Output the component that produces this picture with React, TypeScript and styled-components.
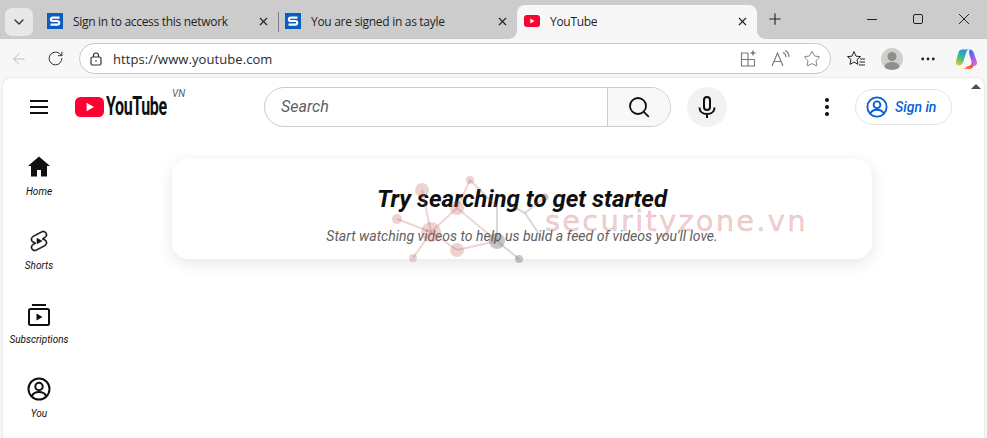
import styled, { createGlobalStyle } from 'styled-components';
import { ChevronDown, X, Plus, ArrowLeft, RotateCw, Star, MoreHorizontal } from 'lucide-react';

const GlobalStyle = createGlobalStyle`
  html, body { margin: 0; padding: 0; background: #f7f7f7; overflow: hidden; }
  * { box-sizing: border-box; }
`;

// ── Browser chrome ──

const Page = styled.div`
  position: relative;
  width: 987px;
  height: 438px;
  display: flex;
  flex-direction: column;
  overflow: hidden;
  font-family: 'Open Sans', 'Liberation Sans', sans-serif;
  color: #1f1f1f;
`;

const TabStrip = styled.div`
  height: 39px;
  flex: none;
  display: flex;
  align-items: flex-end;
  background: #cccccc;
  padding-left: 5px;
`;

const TabMenu = styled.div`
  width: 28px;
  height: 28px;
  margin: 0 7px 3px 0;
  border-radius: 7px;
  background: #e8e8e8;
  display: flex;
  align-items: center;
  justify-content: center;
`;

const Tab = styled.div<{ $active?: boolean; $width: number; $inset?: number }>`
  position: relative;
  width: ${({ $width }) => $width}px;
  height: 34px;
  padding: 0 8px 2px ${({ $inset }) => $inset ?? 7}px;
  display: flex;
  align-items: center;
  gap: 10px;
  font-size: 12px;
  letter-spacing: -0.3px;
  border-radius: 8px 8px 0 0;
  background: ${({ $active }) => ($active ? '#f7f7f7' : 'transparent')};

  ${({ $active }) =>
    $active &&
    `
    &::before, &::after {
      content: '';
      position: absolute;
      bottom: 0;
      width: 8px;
      height: 8px;
    }
    &::before {
      left: -8px;
      background: radial-gradient(circle at 0 0, transparent 7.5px, #f7f7f7 8px);
    }
    &::after {
      right: -8px;
      background: radial-gradient(circle at 100% 0, transparent 7.5px, #f7f7f7 8px);
    }
  `}
`;

const TabLabel = styled.span`
  flex: 1;
  white-space: nowrap;
  overflow: hidden;
`;

const TabDivider = styled.div`
  width: 1px;
  height: 20px;
  margin: 0 0 7px;
  background: #7f7f7f;
  flex: none;
`;

const TabsEnd = styled.div`
  margin-left: 9px;
  height: 39px;
  display: flex;
  align-items: center;
  flex: 1;
  padding-bottom: 1px;
`;

const WindowButtons = styled.div`
  margin-left: auto;
  display: flex;
  align-items: center;
  padding-right: 15px;
  gap: 30px;
  height: 38px;
`;

const Toolbar = styled.div`
  height: 39px;
  flex: none;
  display: flex;
  align-items: center;
  background: #f7f7f7;
  padding: 0 0 0 9px;
`;

const NavButton = styled.div<{ $width: number; $gap?: number }>`
  width: ${({ $width }) => $width}px;
  margin-left: ${({ $gap }) => $gap ?? 0}px;
  display: flex;
  justify-content: center;
  flex: none;
`;

const AddressBar = styled.div`
  width: 752px;
  height: 31px;
  margin-left: 6px;
  flex: none;
  display: flex;
  align-items: center;
  padding: 0 9px 0 9px;
  background: #ffffff;
  border: 1px solid #c9c9c9;
  border-radius: 16px;
`;

const Url = styled.span`
  margin-left: 10px;
  flex: 1;
  font-size: 13px;
  letter-spacing: 0.08px;
  color: #2b2b2b;
`;

const AddressIcons = styled.div`
  display: flex;
  align-items: center;
  gap: 12px;
`;

const ToolIcons = styled.div`
  display: flex;
  align-items: center;
  margin-left: 15px;
  gap: 15px;
`;

const Avatar = styled.div`
  width: 22px;
  height: 22px;
  border-radius: 50%;
  background: #cfcfcc;
  overflow: hidden;
`;

const MoreButton = styled.div`
  display: flex;
  margin: 0 3px 0 1px;
`;

// ── YouTube page ──

const Viewport = styled.main`
  flex: 1;
  margin: 0 3px;
  min-height: 0;
  position: relative;
  background: #ffffff;
  border-radius: 8px 8px 0 0;
  box-shadow: 0 0 2px rgba(0, 0, 0, 0.18);
  font-family: Roboto, 'Liberation Sans', sans-serif;
  font-style: italic;
`;

const Header = styled.header`
  height: 58px;
  display: flex;
  align-items: center;
`;

const HeaderStart = styled.div`
  width: 261px;
  flex: none;
  display: flex;
  align-items: center;
  padding-left: 24px;
`;

const Logo = styled.div`
  position: relative;
  margin-left: 24px;
  display: flex;
  align-items: center;
`;

const LogoWord = styled.span`
  display: inline-block;
  width: 63px;
  margin-left: 2px;
  font-style: normal;
  font-weight: 700;
  font-size: 25px;
  line-height: 24px;
  letter-spacing: -0.6px;
  color: #0f0f0f;
  transform: scaleX(0.64);
  transform-origin: left center;
  white-space: nowrap;
`;

const Country = styled.span`
  position: absolute;
  left: 97px;
  top: -7px;
  font-size: 10px;
  color: #606060;
`;

const SearchBox = styled.div`
  width: 407px;
  height: 40px;
  flex: none;
  display: flex;
  border: 1px solid #cccccc;
  border-radius: 20px;
  overflow: hidden;
`;

const SearchInput = styled.div`
  flex: 1;
  padding: 0 0 2px 16px;
  display: flex;
  align-items: center;
  font-size: 16px;
  color: #606060;
`;

const SearchButton = styled.div`
  width: 63px;
  flex: none;
  display: flex;
  align-items: center;
  justify-content: center;
  background: #f8f8f8;
  border-left: 1px solid #cccccc;
`;

const MicButton = styled.div`
  width: 40px;
  height: 40px;
  margin-left: 16px;
  flex: none;
  border-radius: 50%;
  background: #f2f2f2;
  display: flex;
  align-items: center;
  justify-content: center;
`;

const HeaderEnd = styled.div`
  flex: 1;
  display: flex;
  align-items: center;
  justify-content: flex-end;
  padding-right: 32px;
`;

const SignIn = styled.div`
  width: 97px;
  height: 36px;
  margin-left: 16px;
  display: flex;
  align-items: center;
  gap: 7px;
  padding-left: 10px;
  border: 1px solid #e5e5e5;
  border-radius: 18px;
  font-size: 14px;
  font-weight: 500;
  color: #065fd4;
`;

const ScrollArrow = styled.div`
  position: absolute;
  top: 6px;
  right: 3px;
  width: 0;
  height: 0;
  border-left: 5px solid transparent;
  border-right: 5px solid transparent;
  border-bottom: 5px solid #505050;
`;

const Body = styled.div`
  display: flex;
`;

const Sidebar = styled.nav`
  width: 72px;
  flex: none;
  padding-top: 3px;
`;

const SideItem = styled.div`
  height: 74px;
  padding-top: 16px;
  display: flex;
  flex-direction: column;
  align-items: center;
  gap: 6px;
`;

const SideLabel = styled.span`
  font-size: 10px;
  line-height: 14px;
  color: #0f0f0f;
  white-space: nowrap;
`;

const Feed = styled.section`
  flex: 1;
  padding: 23px 0 0 97px;
`;

const PromptCard = styled.div`
  width: 700px;
  height: 100px;
  padding-top: 25px;
  border-radius: 16px;
  background: #ffffff;
  box-shadow: 0 4px 16px rgba(0, 0, 0, 0.1);
  text-align: center;
`;

const PromptTitle = styled.h2`
  margin: 0;
  font-size: 24px;
  line-height: 30px;
  font-weight: 700;
  color: #0f0f0f;
`;

const PromptText = styled.p`
  margin: 12px 0 0;
  font-size: 14px;
  line-height: 20px;
  color: #606060;
`;

// ── Watermark over the screenshot ──

const Watermark = styled.div`
  position: absolute;
  left: 390px;
  top: 170px;
  pointer-events: none;
`;

const WatermarkText = styled.span`
  position: absolute;
  left: 155px;
  top: 34px;
  font-family: 'DejaVu Sans', sans-serif;
  font-size: 29px;
  line-height: 34px;
  letter-spacing: 2.2px;
  color: rgba(190, 70, 70, 0.26);
  -webkit-text-stroke: 0.5px rgba(190, 70, 70, 0.26);
  white-space: nowrap;
`;

// ── Drawn icons ──

const Favicon = () => (
  <svg width="16" height="16" viewBox="0 0 16 16" style={{ flex: 'none' }}>
    <rect width="16" height="16" fill="#0a5dc2" />
    <path d="M12.5 4.6H5.6a1 1 0 0 0 0 3.4h4.8a1.1 1.1 0 0 1 0 3.6H3.5" fill="none" stroke="#fff" strokeWidth="2.2" />
  </svg>
);

const YoutubeFavicon = () => (
  <svg width="16" height="12" viewBox="0 0 16 12" style={{ flex: 'none' }}>
    <rect width="16" height="12" rx="3" fill="#ff0033" />
    <path d="M6.3 3.4v5.2L10.6 6z" fill="#fff" />
  </svg>
);

const CopilotLogo = () => (
  <svg width="23" height="22" viewBox="0 0 23 22">
    <defs>
      <linearGradient id="cpA" x1="0.6" y1="0" x2="0.2" y2="1">
        <stop offset="0" stopColor="#2b8fe6" />
        <stop offset="0.55" stopColor="#3fc07a" />
        <stop offset="1" stopColor="#f3c430" />
      </linearGradient>
      <linearGradient id="cpB" x1="0.2" y1="0" x2="0.8" y2="1">
        <stop offset="0" stopColor="#3a6ff0" />
        <stop offset="0.5" stopColor="#9a5cf0" />
        <stop offset="1" stopColor="#f06ac0" />
      </linearGradient>
      <linearGradient id="cpC" x1="0" y1="0" x2="1" y2="0">
        <stop offset="0" stopColor="#f7a531" />
        <stop offset="1" stopColor="#f0462f" />
      </linearGradient>
    </defs>
    <path d="M7 1.500h7.500c-1.800.3-2.700 1.300-3.300 3L8.500 13c-.8 2.800-2.200 4.500-4.500 4.500C1.500 17.500.3 15.500 1 13L3.500 4.500C4 2.700 5.200 1.500 7 1.500z" fill="url(#cpA)" />
    <path d="M14.500 1.500c2 0 3.600 1 4.100 3l3.200 9c.8 2.500-.7 4.500-3.300 4.500H14c1.500-.5 2.300-1.700 2.500-3.200.2-1.500-.3-3-1-4.800l-1-3c-.5-1.700-.5-4 0-5.500z" fill="url(#cpB)" />
    <path d="M7 21h7c2.200 0 3.800-1.300 4.500-3H13c-.8 0-1.300.3-1.700 1-.8 1.200-2.200 2-4.300 2z" fill="url(#cpC)" />
  </svg>
);

const PersonCircle = ({ size, color }: { size: number; color: string }) => (
  <svg width={size} height={size} viewBox="0 0 24 24" fill="none" stroke={color} strokeWidth="2" style={{ flex: 'none' }}>
    <circle cx="12" cy="12" r="10.500" />
    <circle cx="12" cy="9.500" r="3.700" />
    <path d="M4.800 19c1.300-2.700 4-4 7.200-4s5.900 1.300 7.200 4" />
  </svg>
);

const shortsPath =
  'M10 14.65v-5.3L15 12l-5 2.65zm7.77-4.33c-.77-.32-1.2-.5-1.2-.5L18 9.06c1.84-.96 2.53-3.23 1.56-5.06s-3.24-2.53-5.07-1.56L6 6.94c-1.29.68-2.07 2.04-2 3.49.07 1.42.93 2.67 2.22 3.25.03.01 1.2.5 1.2.5L6 14.93c-1.83.97-2.53 3.24-1.56 5.07.97 1.83 3.24 2.53 5.07 1.56l8.5-4.5c1.29-.68 2.06-2.04 1.99-3.49-.07-1.42-.94-2.68-2.23-3.25zm-.23 5.86l-8.5 4.5c-1.34.71-3.01.2-3.72-1.14-.71-1.34-.2-3.01 1.14-3.72l2.04-1.08v-1.21l-.69-.28-1.11-.46c-.99-.41-1.65-1.35-1.7-2.41-.05-1.06.52-2.06 1.46-2.56l8.5-4.5c1.34-.71 3.01-.2 3.72 1.14.71 1.34.2 3.01-1.14 3.72L15.5 9.26v1.21l1.8.74c.99.41 1.65 1.35 1.7 2.41.05 1.06-.52 2.06-1.46 2.56z';

const sideItems = [
  {
    label: 'Home',
    icon: (
      <svg width="24" height="24" viewBox="0 0 24 24" fill="#0f0f0f">
        <path d="M12 1.500 1 11h3v10.500h6V15h4v6.500h6V11h3z" />
      </svg>
    ),
  },
  {
    label: 'Shorts',
    icon: (
      <svg width="24" height="24" viewBox="0 0 24 24" fill="#0f0f0f" stroke="#0f0f0f" strokeWidth="0.6">
        <path d={shortsPath} />
      </svg>
    ),
  },
  {
    label: 'Subscriptions',
    icon: (
      <svg width="24" height="24" viewBox="0 0 24 24" fill="none" stroke="#0f0f0f" strokeWidth="2">
        <path d="M5 2h14" />
        <rect x="2" y="6" width="20" height="16" rx="1.500" />
        <path d="M9.500 10.500v7l6-3.500z" fill="#0f0f0f" stroke="none" />
      </svg>
    ),
  },
  { label: 'You', icon: <PersonCircle size={24} color="#0f0f0f" /> },
];

const redLinks = [
  [431, 232, 397, 219],
  [431, 232, 422, 190],
  [431, 232, 457, 208],
  [431, 232, 457, 250],
  [431, 232, 413, 258],
  [457, 208, 470, 180],
  [457, 208, 497, 241],
  [457, 250, 497, 241],
  [470, 180, 497, 207],
];
const greyLinks = [
  [497, 241, 519, 259],
  [497, 241, 497, 207],
  [525, 213, 545, 197],
  [525, 213, 543, 240],
  [525, 213, 510, 205],
];
const redNodes = [
  [422, 190, 7],
  [470, 180, 4],
  [457, 208, 7],
  [397, 219, 5],
  [431, 232, 10],
  [457, 250, 7],
  [413, 258, 4],
];
const greyNodes = [
  [497, 241, 8],
  [519, 259, 4],
  [545, 197, 3.500],
];

const WatermarkGraph = () => (
  <svg width="170" height="100" viewBox="390 170 170 100">
    {redLinks.map(([a, b, c, d], i) => (
      <line key={i} x1={a} y1={b} x2={c} y2={d} stroke="rgba(190,90,90,0.25)" strokeWidth="2" />
    ))}
    {greyLinks.map(([a, b, c, d], i) => (
      <line key={i} x1={a} y1={b} x2={c} y2={d} stroke="rgba(90,90,90,0.24)" strokeWidth="2" />
    ))}
    {redNodes.map(([x, y, r], i) => (
      <circle key={i} cx={x} cy={y} r={r} fill="rgba(190,90,90,0.27)" />
    ))}
    {greyNodes.map(([x, y, r], i) => (
      <circle key={i} cx={x} cy={y} r={r} fill="rgba(70,70,70,0.3)" />
    ))}
  </svg>
);

export default function App() {
  return (
    <Page>
      <GlobalStyle />

      <TabStrip>
        <TabMenu>
          <ChevronDown size={16} color="#333" />
        </TabMenu>
        <Tab $width={238}>
          <Favicon />
          <TabLabel>Sign in to access this network</TabLabel>
          <X size={13} color="#222" />
        </Tab>
        <TabDivider />
        <Tab $width={238} $inset={6}>
          <Favicon />
          <TabLabel>You are signed in as tayle</TabLabel>
          <X size={13} color="#222" />
        </Tab>
        <Tab $active $width={240}>
          <YoutubeFavicon />
          <TabLabel>YouTube</TabLabel>
          <X size={13} color="#222" />
        </Tab>
        <TabsEnd>
          <Plus size={18} strokeWidth={1.500} color="#222" />
          <WindowButtons>
            <svg width="16" height="16" viewBox="0 0 16 16" stroke="#222" strokeWidth="1">
              <path d="M3 8.500h10" />
            </svg>
            <svg width="16" height="16" viewBox="0 0 16 16" fill="none" stroke="#222" strokeWidth="1">
              <rect x="3.500" y="3.500" width="9" height="9" rx="1.500" />
            </svg>
            <svg width="16" height="16" viewBox="0 0 16 16" stroke="#222" strokeWidth="1">
              <path d="m3 3 10 10M13 3 3 13" />
            </svg>
          </WindowButtons>
        </TabsEnd>
      </TabStrip>

      <Toolbar>
        <NavButton $width={20}>
          <ArrowLeft size={18} strokeWidth={1.200} color="#b5b5b5" />
        </NavButton>
        <NavButton $width={36} $gap={8}>
          <RotateCw size={17} strokeWidth={1.400} color="#333" />
        </NavButton>
        <AddressBar>
          <svg width="14" height="14" viewBox="0 0 14 14" fill="none" stroke="#333" strokeWidth="1.200">
            <rect x="2" y="5" width="10" height="8" rx="1.500" />
            <path d="M4.500 5V3.500a2.500 2.500 0 0 1 5 0V5" />
            <circle cx="7" cy="9" r="0.800" fill="#333" stroke="none" />
          </svg>
          <Url>https://www.youtube.com</Url>
          <AddressIcons>
            <svg width="20" height="20" viewBox="0 0 20 20" fill="none" stroke="#777" strokeWidth="1.100">
              <path d="M10 4H3.500v13h13v-6.500M3.500 10.500h13M10 4v13" />
              <path d="M15 1.500v5M12.500 4h5" stroke="#555" />
            </svg>
            <svg width="21" height="20" viewBox="0 0 21 20" fill="none" stroke="#777" strokeWidth="1.100">
              <path d="M2 17 7.500 4 13 17M4 12.500h7" />
              <path d="M13 3.500c2 .8 3 2.500 3 4.500M15 1.500c2.500 1 4 3.500 4 6.500" />
            </svg>
            <Star size={18} strokeWidth={1.100} color="#666" />
          </AddressIcons>
        </AddressBar>
        <ToolIcons>
          <svg width="20" height="20" viewBox="0 0 20 20" fill="none" stroke="#222" strokeWidth="1">
            <path d="M8 2.500 10 7.200l4.500.4-3.500 3 1 4.800L8 13l-4 2.400 1-4.800-3.500-3L6 7.200z" />
            <path d="M14 10h5M13.500 13h5.500M13 16h6" />
          </svg>
          <Avatar>
            <svg width="22" height="22" viewBox="0 0 22 22" fill="#8f8f8a">
              <circle cx="11" cy="8.500" r="4.500" />
              <path d="M3 20c.5-4 4-6 8-6s7.500 2 8 6c-2 1.300-5 2-8 2s-6-.7-8-2z" />
            </svg>
          </Avatar>
          <MoreButton>
            <MoreHorizontal size={18} strokeWidth={1.800} color="#222" />
          </MoreButton>
          <CopilotLogo />
        </ToolIcons>
      </Toolbar>

      <Viewport>
        <Header>
          <HeaderStart>
            <svg width="24" height="24" viewBox="0 0 24 24" fill="#0f0f0f">
              <path d="M3 5h18v2H3zM3 11h18v2H3zM3 17h18v2H3z" />
            </svg>
            <Logo>
              <svg width="29" height="20" viewBox="0 0 29 20">
                <rect width="29" height="20" rx="5.500" fill="#ff0033" />
                <path d="M11.600 5.700v8.600l7.400-4.300z" fill="#fff" />
              </svg>
              <LogoWord>YouTube</LogoWord>
              <Country>VN</Country>
            </Logo>
          </HeaderStart>
          <SearchBox>
            <SearchInput>Search</SearchInput>
            <SearchButton>
              <svg width="24" height="24" viewBox="0 0 24 24" fill="none" stroke="#0f0f0f" strokeWidth="1.800">
                <circle cx="11" cy="11" r="8" />
                <path d="m16.800 16.800 5 5" />
              </svg>
            </SearchButton>
          </SearchBox>
          <MicButton>
            <svg width="24" height="24" viewBox="0 0 24 24" fill="none" stroke="#0f0f0f" strokeWidth="2">
              <rect x="9" y="2" width="6" height="13" rx="3" />
              <path d="M4.500 12.500c0 4.200 3.300 6.500 7.500 6.500s7.500-2.300 7.500-6.500M12 19v4" />
            </svg>
          </MicButton>
          <HeaderEnd>
            <svg width="24" height="24" viewBox="0 0 24 24" fill="#0f0f0f">
              <circle cx="12" cy="5" r="2" />
              <circle cx="12" cy="12" r="2" />
              <circle cx="12" cy="19" r="2" />
            </svg>
            <SignIn>
              <PersonCircle size={22} color="#065fd4" />
              Sign in
            </SignIn>
          </HeaderEnd>
        </Header>
        <ScrollArrow />

        <Body>
          <Sidebar>
            {sideItems.map((item) => (
              <SideItem key={item.label}>
                {item.icon}
                <SideLabel>{item.label}</SideLabel>
              </SideItem>
            ))}
          </Sidebar>
          <Feed>
            <PromptCard>
              <PromptTitle>Try searching to get started</PromptTitle>
              <PromptText>Start watching videos to help us build a feed of videos you'll love.</PromptText>
            </PromptCard>
          </Feed>
        </Body>
      </Viewport>

      <Watermark>
        <WatermarkGraph />
        <WatermarkText>securityzone.vn</WatermarkText>
      </Watermark>
    </Page>
  );
}
